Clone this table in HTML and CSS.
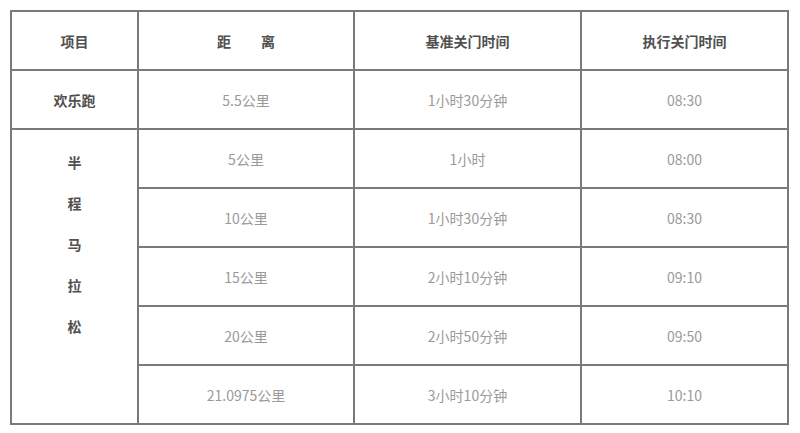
FILE: index.html
```
<!DOCTYPE html>
<html lang="zh">
<head>
<meta charset="utf-8">
<link rel="stylesheet" href="styles.css">
</head>
<body>
<table class="schedule">
  <colgroup>
    <col class="c1"><col class="c2"><col class="c3"><col class="c4">
  </colgroup>
  <thead>
    <tr class="row head">
      <th>项目</th>
      <th><span class="sp">距</span><span>离</span></th>
      <th>基准关门时间</th>
      <th>执行关门时间</th>
    </tr>
  </thead>
  <tbody>
    <tr class="row">
      <td class="cat">欢乐跑</td>
      <td>5.5公里</td>
      <td>1小时30分钟</td>
      <td>08:30</td>
    </tr>
    <tr class="row">
      <td class="cat vert" rowspan="5">半<br>程<br>马<br>拉<br>松</td>
      <td>5公里</td>
      <td>1小时</td>
      <td>08:00</td>
    </tr>
    <tr class="row">
      <td>10公里</td>
      <td>1小时30分钟</td>
      <td>08:30</td>
    </tr>
    <tr class="row">
      <td>15公里</td>
      <td>2小时10分钟</td>
      <td>09:10</td>
    </tr>
    <tr class="row">
      <td>20公里</td>
      <td>2小时50分钟</td>
      <td>09:50</td>
    </tr>
    <tr class="row">
      <td>21.0975公里</td>
      <td>3小时10分钟</td>
      <td>10:10</td>
    </tr>
  </tbody>
</table>
</body>
</html>
```
FILE: styles.css
```
html, body {
  margin: 0;
  padding: 0;
  background: #ffffff;
}
body {
  padding: 10px 0 0 10px;
  font-family: "Noto Sans CJK SC", "Noto Sans", sans-serif;
}
.schedule {
  border-collapse: collapse;
  table-layout: fixed;
  width: 777px;
  border: 2px solid #8c8c8c;
}
.c1 { width: 127px; }
.c2 { width: 216px; }
.c3 { width: 227px; }
.c4 { width: 207px; }
.schedule th,
.schedule td {
  border: 2px solid #7a7a7a;
  text-align: center;
  vertical-align: middle;
  font-size: 14px;
  padding: 0;
  height: 57px;
}
.schedule th {
  font-weight: 700;
  color: #505050;
}
.schedule td {
  color: #9a9a9a;
  font-weight: 400;
}
.schedule td.cat {
  color: #505050;
  font-weight: 700;
}
.schedule td.vert {
  vertical-align: top;
  line-height: 41px;
  padding-top: 12px;
}
.sp {
  margin-right: 30px;
}
```
